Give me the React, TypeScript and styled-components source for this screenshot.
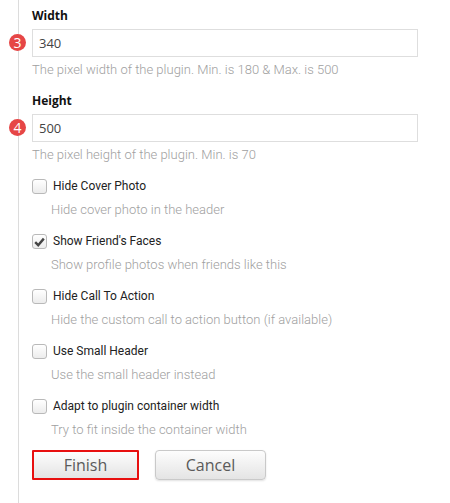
import React from "react";
import styled, { createGlobalStyle } from "styled-components";

const Global = createGlobalStyle`
  html, body { margin: 0; padding: 0; background: #fff; }
  body { font-family: Roboto, "Liberation Sans", sans-serif; }
`;

const Page = styled.div`
  padding-left: 18px;
  height: 503px;
  box-sizing: border-box;
  overflow: hidden;
`;

const Rail = styled.div`
  border-left: 1px solid #dcdcdc;
  padding-left: 13px;
  height: 100%;
  box-sizing: border-box;
  width: 400px;
`;

const Field = styled.div`
  position: relative;
  padding-top: 8px;
  height: 85px;
  box-sizing: border-box;
  display: flex;
  flex-direction: column;
`;

const Label = styled.label`
  font-family: "Open Sans", "Liberation Sans", sans-serif;
  font-weight: 700;
  font-size: 12px;
  line-height: 16px;
  color: #111;
  margin-bottom: 5px;
`;

const InputWrap = styled.div`
  position: relative;
`;

const Badge = styled.span`
  position: absolute;
  left: -23px;
  top: 5px;
  width: 17px;
  height: 17px;
  border-radius: 50%;
  background: #e64646;
  color: #fff;
  font-family: "Open Sans", "Liberation Sans", sans-serif;
  font-size: 14px;
  line-height: 17px;
  text-align: center;
`;

const Input = styled.input`
  display: block;
  width: 100%;
  height: 28px;
  box-sizing: border-box;
  border: 1px solid #dedede;
  border-radius: 0;
  padding: 0 6px;
  font-family: "Open Sans", "Liberation Sans", sans-serif;
  font-size: 13px;
  color: #444;
  outline: none;
`;

const Help = styled.div`
  margin-top: 4px;
  font-family: Roboto, "Liberation Sans", sans-serif;
  font-weight: 300;
  font-size: 13px;
  line-height: 18px;
  color: #a0a0a0;
`;

const Options = styled.div`
  margin-top: 9px;
  display: flex;
  flex-direction: column;
  gap: 15px;
`;

const Option = styled.div`
  display: flex;
  flex-direction: column;
`;

const CheckRow = styled.label`
  display: flex;
  align-items: center;
  gap: 6px;
  height: 15px;
`;

const Box = styled.span<{ $checked?: boolean }>`
  width: 15px;
  height: 15px;
  box-sizing: border-box;
  border: 1px solid #b9b9b9;
  border-radius: 3px;
  background: linear-gradient(#ffffff, #ececec);
  display: flex;
  align-items: center;
  justify-content: center;
`;

const CheckText = styled.span`
  font-family: Roboto, "Liberation Sans", sans-serif;
  font-size: 12px;
  line-height: 15px;
  color: #222;
`;

const OptDesc = styled.div`
  margin-top: 7px;
  padding-left: 19px;
  font-family: Roboto, "Liberation Sans", sans-serif;
  font-weight: 300;
  font-size: 13px;
  line-height: 18px;
  color: #a0a0a0;
`;

const Buttons = styled.div`
  display: flex;
  gap: 16px;
  margin-top: 11px;
`;

const Button = styled.button<{ $focus?: boolean }>`
  height: 30px;
  box-sizing: border-box;
  padding: 0;
  font-family: "Open Sans", "Liberation Sans", sans-serif;
  font-size: 16px;
  color: #5a5a5a;
  background: linear-gradient(#fdfdfd, #e4e4e4);
  border: ${(p) => (p.$focus ? "2px solid #e81010" : "1px solid #c9c9c9")};
  border-radius: ${(p) => (p.$focus ? "1px" : "4px")};
  box-shadow: ${(p) => (p.$focus ? "none" : "0 1px 2px rgba(0,0,0,0.12)")};
  width: ${(p) => (p.$focus ? "107px" : "111px")};
`;

const Check = () => (
  <svg width="11" height="10" viewBox="0 0 11 10">
    <path d="M1.2 5.2 L4.2 8.2 L9.8 1.6" fill="none" stroke="#444" strokeWidth="2.4" strokeLinejoin="miter" />
  </svg>
);

const options = [
  { label: "Hide Cover Photo", desc: "Hide cover photo in the header", checked: false },
  { label: "Show Friend's Faces", desc: "Show profile photos when friends like this", checked: true },
  { label: "Hide Call To Action", desc: "Hide the custom call to action button (if available)", checked: false },
  { label: "Use Small Header", desc: "Use the small header instead", checked: false },
  { label: "Adapt to plugin container width", desc: "Try to fit inside the container width", checked: false },
];

export default function App() {
  return (
    <Page>
      <Global />
      <Rail>
        <Field>
          <Label>Width</Label>
          <InputWrap>
            <Badge>3</Badge>
            <Input defaultValue="340" />
          </InputWrap>
          <Help>The pixel width of the plugin. Min. is 180 &amp; Max. is 500</Help>
        </Field>
        <Field>
          <Label>Height</Label>
          <InputWrap>
            <Badge>4</Badge>
            <Input defaultValue="500" />
          </InputWrap>
          <Help>The pixel height of the plugin. Min. is 70</Help>
        </Field>
        <Options>
          {options.map((o) => (
            <Option key={o.label}>
              <CheckRow>
                <Box $checked={o.checked}>{o.checked && <Check />}</Box>
                <CheckText>{o.label}</CheckText>
              </CheckRow>
              <OptDesc>{o.desc}</OptDesc>
            </Option>
          ))}
        </Options>
        <Buttons>
          <Button $focus>Finish</Button>
          <Button>Cancel</Button>
        </Buttons>
      </Rail>
    </Page>
  );
}
